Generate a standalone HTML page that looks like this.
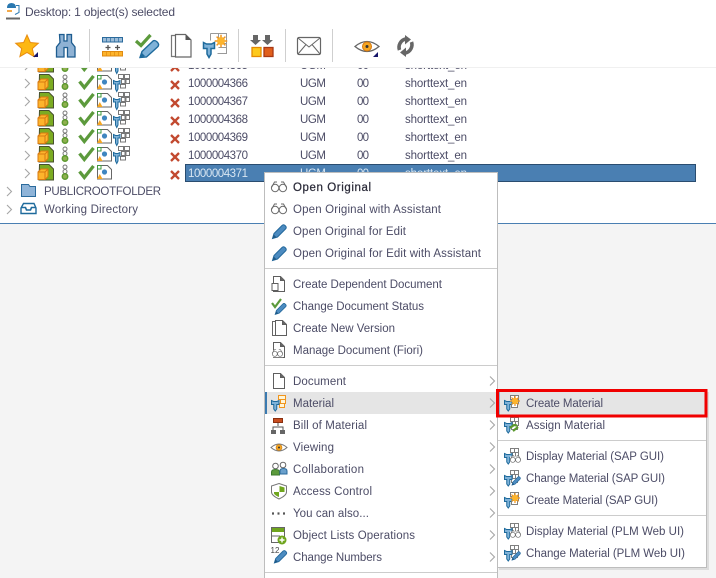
<!DOCTYPE html>
<html><head><meta charset="utf-8"><style>
html,body{margin:0;padding:0;background:#fff}
svg{display:block}
text{font-family:"Liberation Sans",sans-serif;font-size:11.5px;fill:#4c4c66}
</style></head><body>
<svg width="716" height="578" viewBox="0 0 716 578" xmlns="http://www.w3.org/2000/svg">
<defs>
<g id="chev"><path d="M0 0l4.500 4.500-4.500 4.500" fill="none" stroke="#a6a6a6" stroke-width="1.100"/></g>
<g id="x"><path d="M1 1l8 8M9 1l-8 8" stroke="#c2492f" stroke-width="2.300" fill="none"/></g>
<g id="row">
<path d="M39.500 -8.500h9.500l4.500 4.500v11h-14.500z" fill="#7bab22" stroke="#47502f"/>
<path d="M38 -1l3-3h7v7.500l-3 3h-7z" fill="#fdb42c" stroke="#d87a10"/>
<path d="M38 -1h7v7.500M45 -1l3-3" fill="none" stroke="#d87a10"/>
<circle cx="65" cy="-6" r="2" fill="none" stroke="#777"/>
<circle cx="65" cy="-1.500" r="2" fill="none" stroke="#777"/>
<circle cx="65" cy="3.500" r="2.700" fill="#90b050" stroke="#5c9a2e" stroke-width="1.500"/>
<path d="M79.500 -1.500l4.800 6 9.200-11.500" fill="none" stroke="#5c9a3c" stroke-width="3.300"/>
<path d="M97.500 -7.500h10l4 4v9.500h-14z" fill="#fff" stroke="#666"/>
<rect x="97.500" y="-7.500" width="3.500" height="3.500" fill="#fff" stroke="#3f9a3f"/>
<circle cx="104.500" cy="-1" r="2.600" fill="#3f86c0"/>
<path d="M97 6l2.800-5 2.800 5z" fill="#f5a623"/>
</g>
<g id="mat">
<path d="M118.500 -8.500h5v4h-5zM124.500 -8.500h5v4h-5zM121.500 -3.500h3.500v4h-3.500zM126 -3.500h3.500v4h-3.500zM120.500 1.500h5v3.500h-5z" fill="#fff" stroke="#777"/>
<path d="M113.500 -2.500l2 1h2.500l2-1v3.500h-2v5l-1.250 2.500-1.250-2.500v-5h-2z" fill="#7fb2d8" stroke="#1e6a9c"/>
</g>
<g id="glass" fill="none" stroke="#6a6a6a" stroke-width="1"><circle cx="4.100" cy="10" r="3.700"/><circle cx="11.900" cy="10" r="3.700"/><path d="M.5 9.500l3-5.500h2.500M15.500 9.500l-3-5.500h-2.500"/></g>
<g id="pencil"><path d="M1.500 15.500l1.500-5 8-8c1-1 2-1 3 0l.5.500c1 1 1 2 0 3l-8 8z" fill="#4c8bc0" stroke="#23689c"/><path d="M1.500 15.500l1.200-4 2.800 2.800z" fill="#1e5a88"/></g>
<g id="doc"><path d="M2.500 .5h7l4 4v11h-11z" fill="#fff" stroke="#5f5f5f"/><path d="M9.500 .5v4h4" fill="#666" stroke="#5f5f5f"/></g>
<g id="smat">
<path d="M6.500 .5h4v4h-4zM10.500 .5h4v4h-4zM8.500 4.500h3v4h-3zM11.500 4.500h3v4h-3zM7.500 8.500h6v4h-6z" fill="#fff" stroke="#7f7f7f"/>
<path d="M.5 5.500l2 1h3.500l2-1v4h-2.250v4.500l-1.500 2-1.500-2v-4.500h-2.250z" fill="#7fb2d8" stroke="#1e6a9c"/>
</g>
<g id="sun"><circle cx="0" cy="0" r="3.200" fill="#fdb42c"/><path d="M0-5v2M0 3v2M-5 0h2M3 0h2M-3.500-3.500l1.500 1.500M2 2l1.500 1.500M-3.500 3.500l1.500-1.500M2-2l1.500-1.500" stroke="#f0951e" stroke-width="1.200"/></g>
<g id="m-disp"><use href="#smat"/><g transform="translate(6,5) scale(.68)"><rect x="0" y="5" width="16" height="10" fill="#fff"/><use href="#glass"/></g></g>
<g id="m-chg"><use href="#smat"/><g transform="translate(7,5.500) scale(.62)"><use href="#pencil"/></g></g>
<g id="m-new"><use href="#smat"/><use href="#sun" x="11" y="6"/></g>
</defs>

<rect width="716" height="578" fill="#fff"/>
<!-- tree rows -->
<g>
<use href="#row" y="65"/><use href="#mat" y="65"/><use href="#chev" x="25" y="61"/><use href="#x" x="170" y="62"/>
<text x="188" y="69" textLength="60">1000004365</text><text x="300" y="69" textLength="26">UGM</text><text x="357" y="69" textLength="12">00</text><text x="405" y="69" textLength="62">shorttext_en</text>
</g>
<rect x="0" y="0" width="716" height="67" fill="#fff"/>
<rect x="0" y="67" width="716" height="1" fill="#f0f0f0"/>

<g>
<use href="#chev" x="25" y="79"/><use href="#row" y="83"/><use href="#mat" y="83"/><use href="#x" x="170" y="80"/>
<text x="188" y="87" textLength="60">1000004366</text><text x="300" y="87" textLength="26">UGM</text><text x="357" y="87" textLength="12">00</text><text x="405" y="87" textLength="62">shorttext_en</text>
<use href="#chev" x="25" y="97"/><use href="#row" y="101"/><use href="#mat" y="101"/><use href="#x" x="170" y="98"/>
<text x="188" y="105" textLength="60">1000004367</text><text x="300" y="105" textLength="26">UGM</text><text x="357" y="105" textLength="12">00</text><text x="405" y="105" textLength="62">shorttext_en</text>
<use href="#chev" x="25" y="115"/><use href="#row" y="119"/><use href="#mat" y="119"/><use href="#x" x="170" y="116"/>
<text x="188" y="123" textLength="60">1000004368</text><text x="300" y="123" textLength="26">UGM</text><text x="357" y="123" textLength="12">00</text><text x="405" y="123" textLength="62">shorttext_en</text>
<use href="#chev" x="25" y="133"/><use href="#row" y="137"/><use href="#mat" y="137"/><use href="#x" x="170" y="134"/>
<text x="188" y="141" textLength="60">1000004369</text><text x="300" y="141" textLength="26">UGM</text><text x="357" y="141" textLength="12">00</text><text x="405" y="141" textLength="62">shorttext_en</text>
<use href="#chev" x="25" y="151"/><use href="#row" y="155"/><use href="#mat" y="155"/><use href="#x" x="170" y="152"/>
<text x="188" y="159" textLength="60">1000004370</text><text x="300" y="159" textLength="26">UGM</text><text x="357" y="159" textLength="12">00</text><text x="405" y="159" textLength="62">shorttext_en</text>
<use href="#chev" x="25" y="169"/><use href="#row" y="173"/><use href="#x" x="170" y="170"/>
<rect x="185.500" y="164.500" width="510" height="17" fill="#4a7fb2" stroke="#2a4d70"/>
<text x="188" y="177" textLength="60" style="fill:#d8e6f2">1000004371</text><text x="300" y="177" textLength="26" style="fill:#d8e6f2">UGM</text><text x="357" y="177" textLength="12" style="fill:#d8e6f2">00</text><text x="405" y="177" textLength="62" style="fill:#d8e6f2">shorttext_en</text>
</g>
<use href="#chev" x="7" y="187"/>
<path d="M21.500 184.500h7l1.500 2h5.500v10h-14z" fill="#8fb4d8" stroke="#2a6a9c"/>
<text x="44" y="195" textLength="117">PUBLICROOTFOLDER</text>
<use href="#chev" x="7" y="205"/>
<path d="M23.500 203.500h10.500l2 4.500v5.500h-15v-5.500z" fill="#fff" stroke="#1e6a9c" stroke-width="1.400"/><path d="M21 207.500h4.500l1 2.500h4l1-2.500h4.500" fill="none" stroke="#1e6a9c" stroke-width="1.600"/>
<text x="44" y="213" textLength="94">Working Directory</text>

<rect x="0" y="223" width="716" height="355" fill="#f4f4f4"/>
<rect x="0" y="223" width="716" height="1" fill="#4a7fb2"/>

<!-- title -->
<path d="M7 8q0-5 4.500-5t4.500 5z" fill="#2a78b0"/><path d="M7 11h5" stroke="#f0951e" stroke-width="1.600"/><path d="M6 18.500h14" stroke="#666" stroke-width="2"/><path d="M16 5.500h3v7l-4 2" fill="none" stroke="#2a78b0"/>
<text x="25" y="16" textLength="150" style="font-size:12px">Desktop: 1 object(s) selected</text>

<!-- toolbar -->
<path d="M27 35l3.300 7.500 8 .8-6 5.300 1.800 8-7.100-4.200-7.100 4.200 1.800-8-6-5.300 8-.8z" fill="#fdb813" stroke="#e88c10"/>
<path d="M38 52v5h-5z" fill="#15156a"/>
<path d="M59.500 34.500h4.500v6.500h3v-6.500h4.500v8l3.500 4.500v10h-7.500v-9.500h-3.500v9.500h-7.500v-10l3.500-4.500z" fill="#8fb2d4" stroke="#1d5c8f" stroke-width="1.300"/>
<rect x="89" y="29" width="1" height="33" fill="#cfcfcf"/>
<rect x="102.500" y="37.500" width="20" height="4.500" fill="#9cbcd8" stroke="#2a6a9c"/>
<path d="M106.500 37.500v4.500M110.500 37.500v4.500M114.500 37.500v4.500M118.500 37.500v4.500" stroke="#2a6a9c" stroke-width=".7"/>
<path d="M105.500 47.500h5M108 45v5M115 47.500h5M117.500 45v5" stroke="#555" stroke-width="1.300" fill="none"/>
<rect x="102.500" y="51.500" width="20" height="4.500" fill="#fdb42c" stroke="#e08a10"/>
<path d="M106.500 51.500v4.500M110.500 51.500v4.500M114.500 51.500v4.500M118.500 51.500v4.500" stroke="#e08a10" stroke-width=".7"/>
<path d="M140 57.500l2-6 11-10.500c1.500-1 3.500 0 5 2 1 1.500.5 3-.5 4l-11 10z" fill="#7fb2d8" stroke="#1e6a9c" stroke-width="1.400"/><path d="M140 57.500l1.500-5 3.500 3.500z" fill="#1e6a9c"/>
<path d="M136 41l5 4.500 9.500-10.500" fill="none" stroke="#5c9a3c" stroke-width="3.200"/>
<path d="M175 35.500h-3.500v21h3.500" fill="none" stroke="#777" stroke-width="1.200"/><path d="M175.500 34.500h10l5.500 5.500v17h-15.500z" fill="#fff" stroke="#666" stroke-width="1.200"/><path d="M185.500 34.500l5.500 5.500h-5.500z" fill="#555"/>
<path d="M210.500 33.500h16v20h-9M210.500 33.500v7M218.500 33.500v10M218.500 43.500h8M218.500 47.500h8" fill="none" stroke="#999"/>
<path d="M203.500 42.500l3 1.500h5l3-1.500v6h-3.500v5.500l-2 3.500-2-3.500v-5.500h-3.500z" fill="#7fb2d8" stroke="#1e6a9c" stroke-width="1.500"/>
<use href="#sun" transform="translate(221,41) scale(1.250)"/>
<rect x="238" y="29" width="1" height="33" fill="#cfcfcf"/>
<path d="M253 35h5v5h3l-5.500 5-5.500-5h3zM265 35h5v5h3l-5.500 5-5.500-5h3z" fill="#666"/>
<rect x="252" y="47.500" width="9" height="9" fill="#fdc91c" stroke="#e58a00" stroke-width="1.300"/>
<rect x="264" y="47.500" width="9" height="9" fill="#e05f1c" stroke="#a83814" stroke-width="1.300"/>
<rect x="285" y="29" width="1" height="33" fill="#cfcfcf"/>
<rect x="297.500" y="37.500" width="23" height="17" rx="1.500" fill="#fff" stroke="#666" stroke-width="1.200"/><path d="M298 38l11 9 11-9M298 54l8-9.500M320 54l-8-9.500" fill="none" stroke="#666"/>
<rect x="332" y="29" width="1" height="33" fill="#cfcfcf"/>
<path d="M355 46.500q12-10 24 0-12 10-24 0z" fill="#fff" stroke="#666" stroke-width="1.300"/><circle cx="367" cy="46.500" r="4.500" fill="#f5a623" stroke="#d87a10"/><circle cx="367" cy="46.500" r="1.500" fill="#333"/>
<path d="M378 52v5h-5z" fill="#15156a"/>
<path d="M399.500 50a8.500 8.500 0 0 1 6-11M411.500 42a8.500 8.500 0 0 1-6 11" fill="none" stroke="#666" stroke-width="3.600"/>
<path d="M405 35l6 4.500-6 5zM406 57l-6-4.500 6-5z" fill="#666"/>

<!-- main menu -->
<rect x="264.500" y="172.500" width="233" height="410" fill="#fff" stroke="#bdbdbd"/>
<rect x="265" y="268" width="232" height="1" fill="#ccc"/>
<rect x="265" y="365" width="232" height="1" fill="#ccc"/>
<rect x="265" y="572" width="232" height="1" fill="#ccc"/>
<rect x="265" y="392" width="232" height="22" fill="#e5e5e5"/>
<rect x="265" y="392" width="2" height="22" fill="#3a7ab0"/>

<use href="#glass" x="271" y="178"/>
<use href="#glass" x="271" y="200"/>
<use href="#pencil" x="271" y="223"/>
<use href="#pencil" x="271" y="245"/>
<use href="#doc" x="271" y="276"/><rect x="272" y="283.500" width="6" height="7" fill="#fff" stroke="#5f5f5f"/>
<g transform="translate(274,302) scale(.8)"><use href="#pencil"/></g><path d="M272 303l3 4 6-8" fill="none" stroke="#5c9a3c" stroke-width="2.200"/>
<path d="M275 321.500h-2.500v14h3" fill="none" stroke="#666"/><use href="#doc" x="273" y="320"/>
<use href="#doc" x="271" y="342"/><g transform="translate(272,347) scale(.68)"><rect y="5" width="16" height="10" fill="#fff"/><use href="#glass"/></g>
<use href="#doc" x="271" y="373"/>
<g transform="translate(271,395)"><path d="M7.500 .5h7v4h-7zM9.500 4.500h5v4h-5zM8.500 8.500h5v4h-5z" fill="#fff5d8" stroke="#f0951e"/><path d="M.5 5.500l2 1h3.500l2-1v4h-2.250v4.500l-1.500 2-1.500-2v-4.500h-2.250z" fill="#7fb2d8" stroke="#1e6a9c"/></g>
<rect x="273.500" y="418.500" width="9" height="4" fill="#c84e20" stroke="#8a3010"/><path d="M278 423v3M273 430v-3h10v3" fill="none" stroke="#555"/><rect x="271" y="430" width="5" height="4" fill="#666"/><rect x="280" y="430" width="5" height="4" fill="#666"/>
<path d="M271 447.500q8-7 16 0-8 7-16 0z" fill="#fff" stroke="#777"/><circle cx="279" cy="447.500" r="3" fill="#f5a623" stroke="#c87a10" stroke-width=".6"/><circle cx="279" cy="447.500" r="1" fill="#333"/>
<circle cx="275.500" cy="466" r="2.800" fill="#fff" stroke="#666"/><path d="M271.500 475v-3q0-2.500 4-2.500t4 2.500v3z" fill="#5c9a3c" stroke="#3c7a2c"/>
<circle cx="283" cy="465" r="2.800" fill="#fff" stroke="#666"/><path d="M280 474v-3q0-2.500 3.500-2.500t3.500 2.500v3z" fill="#6aa0cc" stroke="#2a6a9c"/>
<path d="M279 483.500l7.500 2.500v6q0 3.500-7.500 7-7.500-3.500-7.500-7v-6z" fill="#fff" stroke="#777"/>
<path d="M279.500 486l5 1.500v4.500h-5zM279 492v5q-4-1.500-5-3.500v-1.500z" fill="#6fa51e"/>
<path d="M272 513.500h2M277.500 513.500h2M283 513.500h2" stroke="#555" stroke-width="2.200"/>
<rect x="271.500" y="527.500" width="13" height="15" fill="#fff" stroke="#666"/><rect x="272" y="528" width="12" height="4" fill="#6fa51e"/><path d="M272 536h8" stroke="#666"/><circle cx="282" cy="540" r="4.500" fill="#6fa51e"/><path d="M282 537.500v5M279.500 540h5" stroke="#fff" stroke-width="1.400"/>
<text x="270.500" y="553" style="font-size:8px;fill:#444">12</text>
<g transform="translate(273,549) scale(.9)"><use href="#pencil"/></g>

<text x="293" y="191" textLength="78" style="fill:#2c2c3a;stroke:#2c2c3a;stroke-width:.25">Open Original</text>
<text x="293" y="213" textLength="148">Open Original with Assistant</text>
<text x="293" y="235" textLength="113">Open Original for Edit</text>
<text x="293" y="257" textLength="188">Open Original for Edit with Assistant</text>
<text x="293" y="288" textLength="149">Create Dependent Document</text>
<text x="293" y="310" textLength="131">Change Document Status</text>
<text x="293" y="332" textLength="102">Create New Version</text>
<text x="293" y="354" textLength="130">Manage Document (Fiori)</text>
<text x="293" y="385" textLength="53">Document</text>
<text x="293" y="407" textLength="41">Material</text>
<text x="293" y="429" textLength="74">Bill of Material</text>
<text x="293" y="451" textLength="41">Viewing</text>
<text x="293" y="473" textLength="71">Collaboration</text>
<text x="293" y="495" textLength="79">Access Control</text>
<text x="293" y="517" textLength="76">You can also...</text>
<text x="293" y="539" textLength="122">Object Lists Operations</text>
<text x="293" y="561" textLength="89">Change Numbers</text>
<use href="#chev" x="490" y="376.500"/><use href="#chev" x="490" y="398.500"/><use href="#chev" x="490" y="420.500"/><use href="#chev" x="490" y="442.500"/><use href="#chev" x="490" y="464.500"/><use href="#chev" x="490" y="486.500"/><use href="#chev" x="490" y="508.500"/><use href="#chev" x="490" y="530.500"/><use href="#chev" x="490" y="552.500"/>

<!-- submenu -->
<rect x="499" y="392" width="210" height="178" fill="#ddd"/>
<rect x="497.500" y="390.500" width="209" height="177" fill="#fff" stroke="#bdbdbd"/>
<rect x="498" y="391" width="208" height="25" fill="#e5e5e5"/>
<rect x="498" y="391" width="1.500" height="25" fill="#3a7ab0"/>
<rect x="498" y="440" width="208" height="1" fill="#ccc"/>
<rect x="498" y="515" width="208" height="1" fill="#ccc"/>
<use href="#m-new" x="504" y="395"/>
<use href="#smat" x="504" y="417"/><path d="M510 428l4-3 3 .5M513 431l5-4" fill="none" stroke="#5c9a2e" stroke-width="2.200"/>
<use href="#m-disp" x="504" y="448"/>
<use href="#m-chg" x="504" y="470"/>
<use href="#m-new" x="504" y="492"/>
<use href="#m-disp" x="504" y="523"/>
<use href="#m-chg" x="504" y="545"/>
<text x="526" y="407" textLength="77">Create Material</text>
<text x="526" y="429" textLength="79">Assign Material</text>
<text x="526" y="460" textLength="138">Display Material (SAP GUI)</text>
<text x="526" y="482" textLength="139">Change Material (SAP GUI)</text>
<text x="526" y="504" textLength="132">Create Material (SAP GUI)</text>
<text x="526" y="535" textLength="158">Display Material (PLM Web UI)</text>
<text x="526" y="557" textLength="159">Change Material (PLM Web UI)</text>
<rect x="497.500" y="390.500" width="208.500" height="25.500" fill="none" stroke="#f00000" stroke-width="3"/>
</svg>
</body></html>
